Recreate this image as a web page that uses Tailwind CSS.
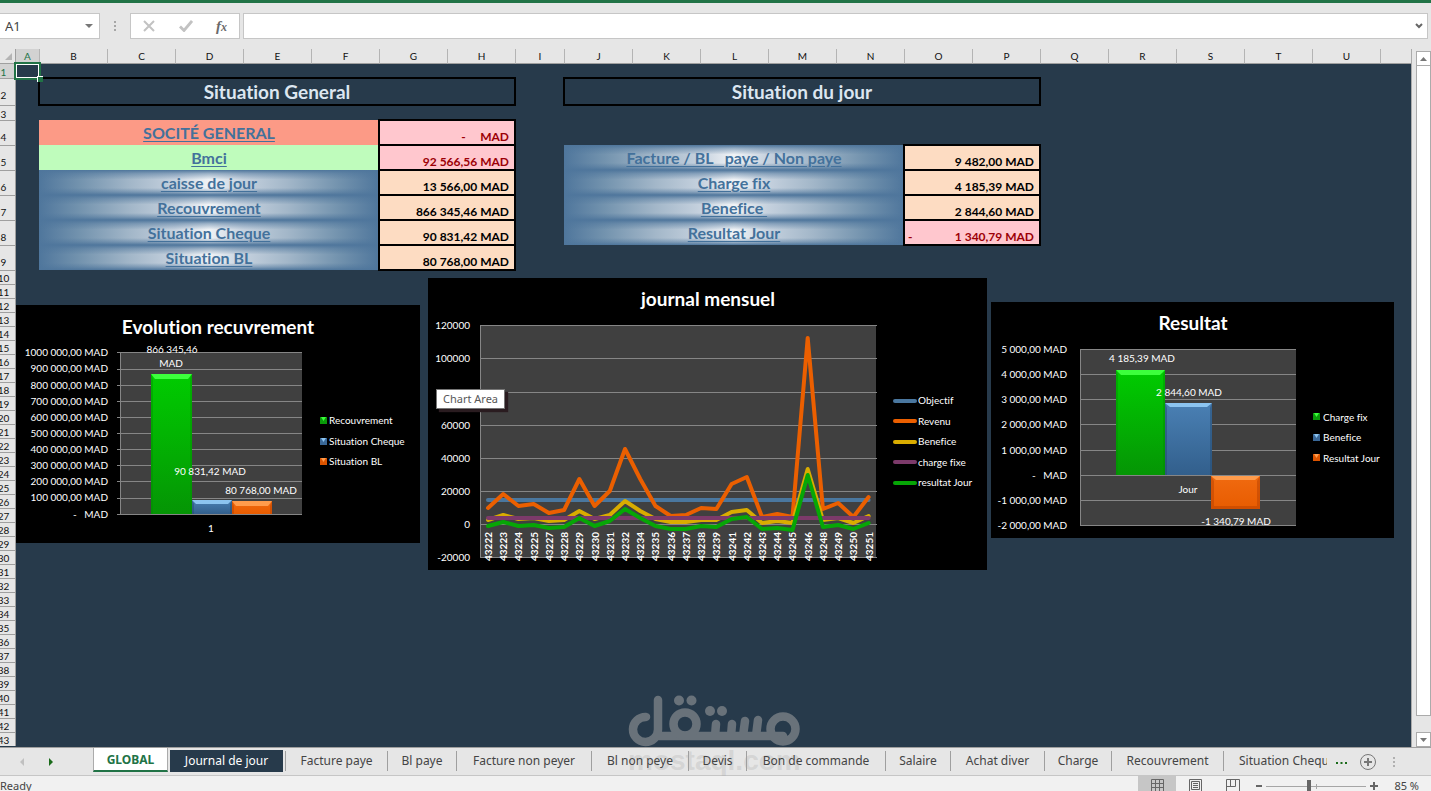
<!DOCTYPE html>
<html lang="fr">
<head>
<meta charset="utf-8">
<title>GLOBAL</title>
<script src="https://cdn.jsdelivr.net/npm/@tailwindcss/browser@4"></script>
</head>
<body class="flex h-screen flex-col overflow-hidden bg-[#e6e6e6] font-['Noto_Sans',sans-serif] text-[#444]">

<div class="h-[3px] shrink-0 bg-[#217346]"></div>

<!-- Formula bar -->
<header class="flex h-[46px] shrink-0 items-start pt-[10px] pr-[3px]">
  <div class="flex h-[26px] w-[100px] items-center border border-l-0 border-[#c6c6c6] bg-white">
    <input aria-label="Name box" value="A1" class="w-[80px] bg-transparent pt-px pl-[5px] text-[13px] text-[#444] outline-none">
    <button aria-label="Open name list" class="flex w-[18px] justify-center"><svg width="8" height="4" viewBox="0 0 8 4"><path d="M0 0h8L4 4z" fill="#777"/></svg></button>
  </div>
  <svg class="mx-3.5 h-[26px]" width="2" height="26" viewBox="0 0 2 26" fill="#a6a6a6"><path d="M0 8h2v2H0zM0 12h2v2H0zM0 16h2v2H0z"/></svg>
  <div class="flex h-[26px] w-[110px] items-center justify-between border border-[#c6c6c6] bg-white pr-[12px] pl-3">
    <button aria-label="Cancel"><svg width="12" height="12" viewBox="0 0 12 12" fill="none" stroke="#c2c2c2" stroke-width="2"><path d="M1 1l10 10M11 1L1 11"/></svg></button>
    <button aria-label="Enter"><svg width="14" height="12" viewBox="0 0 14 12" fill="none" stroke="#c2c2c2" stroke-width="2.800"><path d="M1 6.500l4 4L13 1"/></svg></button>
    <button aria-label="Insert function" class="font-['Liberation_Serif',serif] text-[15px] leading-5 font-bold text-[#6a6a6a] italic">f<span class="text-[12px]">x</span></button>
  </div>
  <div class="ml-[3px] flex h-[26px] flex-1 items-center border border-[#c6c6c6] bg-white">
    <input aria-label="Formula bar" class="min-w-0 flex-1 bg-transparent px-2 text-[13px] outline-none">
    <button aria-label="Expand formula bar" class="px-1"><svg width="8" height="6" viewBox="0 0 8 6" fill="none" stroke="#666" stroke-width="2"><path d="M1 1l3 3 3-3"/></svg></button>
  </div>
</header>

<main class="flex min-h-0 flex-1">
  <div class="relative min-w-0 flex-1 overflow-hidden border-r border-[#ababab] bg-[#273a4b] font-['Lato','Noto_Sans',sans-serif] [font-variant-ligatures:none]">
    <table class="w-full table-fixed border-separate border-spacing-0">
      <colgroup>
        <col class="w-[16px]"><col class="w-[23px]">
        <col class="w-[68px]"><col class="w-[68px]"><col class="w-[68px]"><col class="w-[68px]"><col class="w-[68px]"><col class="w-[68px]"><col class="w-[68px]">
        <col class="w-[49px]">
        <col class="w-[68px]"><col class="w-[68px]"><col class="w-[68px]"><col class="w-[68px]"><col class="w-[68px]"><col class="w-[68px]"><col class="w-[68px]"><col class="w-[68px]"><col class="w-[68px]"><col class="w-[68px]"><col class="w-[68px]"><col class="w-[68px]">
        <col>
      </colgroup>
      <thead>
        <tr id="letters" class="h-[15px] text-[10px] leading-[14px] text-[#111]">
          <th class="border-r border-b border-[#9f9f9f] bg-[#e6e6e6] p-0"><svg class="ml-auto mr-[3px]" width="7" height="7" viewBox="0 0 7 7"><path d="M7 0v7H0z" fill="#b4b4b4"/></svg></th>
          <th class="border-b border-[#217346] bg-[#d2d2d2] p-0 font-normal text-[#217346]">A</th>
        </tr>
      </thead>
      <tbody id="rows" class="text-[10px] leading-3 text-[#111]">
        <tr class="h-[14px]">
          <th class="overflow-hidden border-r border-[#9f9f9f] bg-[#d2d2d2] p-0 align-bottom font-normal text-[#217346]"><div class="-ml-2">1</div></th>
          <td class="relative z-10 p-0">
            <span class="absolute -inset-0.5 border-2 border-[#217346]"><span class="absolute inset-0 border border-white"></span><span class="absolute -right-1 -bottom-1 size-[6px] border-t border-l border-white bg-[#217346]"></span></span>
          </td>
          <td colspan="21" class="p-0"></td>
        </tr>
        <tr class="h-[27px]">
          <th class="overflow-hidden border-t border-r border-[#9f9f9f] bg-[#e6e6e6] p-0 align-bottom font-normal"><div class="-ml-2 pb-1">2</div></th>
          <td class="p-0"></td>
          <td colspan="7" class="relative p-0 pt-px text-center text-[19px] leading-6 font-bold text-[#dce6f0] before:absolute before:-inset-px before:border-2 before:border-black">Situation General</td>
          <td class="p-0"></td>
          <td colspan="7" class="relative p-0 pt-px text-center text-[19px] leading-6 font-bold text-[#dce6f0] before:absolute before:-inset-px before:border-2 before:border-black">Situation du jour</td>
          <td colspan="6" class="p-0"></td>
        </tr>
        <tr class="h-[15px]">
          <th class="overflow-hidden border-t border-r border-[#9f9f9f] bg-[#e6e6e6] p-0 align-bottom font-normal"><div class="-ml-2">3</div></th>
          <td colspan="22" class="p-0"></td>
        </tr>
      </tbody>
    </table>

    <!-- Evolution recuvrement -->
    <svg class="absolute top-[256px] left-[16px]" width="404" height="238" viewBox="0 0 404 238" font-size="10" fill="#fff">
      <defs>
        <linearGradient id="g" x2="0" y2="1"><stop offset="0" stop-color="#0c0"/><stop offset="1" stop-color="#059505"/></linearGradient>
        <linearGradient id="b" x2="0" y2="1"><stop offset="0" stop-color="#4a80b4"/><stop offset="1" stop-color="#325f8c"/></linearGradient>
        <linearGradient id="o" x2="0" y2="1"><stop offset="0" stop-color="#f06a10"/><stop offset="1" stop-color="#e85c00"/></linearGradient>
      </defs>
      <rect width="404" height="238" fill="#000"/>
      <text x="202" y="29" text-anchor="middle" font-size="19" font-weight="700">Evolution recuvrement</text>
      <rect x="104" y="47" width="182" height="162" fill="#404040"/>
      <path d="M101 47.500h185M101 64.500h185M101 80.500h185M101 96.500h185M101 112.500h185M101 128.500h185M101 144.500h185M101 160.500h185M101 176.500h185M101 193.500h185M101 209.500h185M104.500 47v163" stroke="#868686"/>
      <g text-anchor="end">
        <text x="92" y="51">1000 000,00 MAD</text><text x="92" y="67">900 000,00 MAD</text><text x="92" y="84">800 000,00 MAD</text><text x="92" y="100">700 000,00 MAD</text><text x="92" y="116">600 000,00 MAD</text><text x="92" y="132">500 000,00 MAD</text><text x="92" y="148">400 000,00 MAD</text><text x="92" y="164">300 000,00 MAD</text><text x="92" y="180">200 000,00 MAD</text><text x="92" y="196">100 000,00 MAD</text><text x="92" y="213" xml:space="preserve">-   MAD</text>
      </g>
      <rect x="135" y="69" width="41" height="140" fill="url(#g)"/><path d="M135 69h41l-4 5h-33z" fill="#3cff3c"/><path d="M135 69l2 5v135h-2zM176 69l-2 5v135h2z" fill="#008c00" opacity=".4"/>
      <rect x="176" y="195" width="40" height="14" fill="url(#b)"/><path d="M176 195h40l-4 4h-32z" fill="#8cc4f0"/><path d="M176 195l2 4v10h-2zM216 195l-2 4v10h2z" fill="#234a70" opacity=".5"/>
      <rect x="216" y="196" width="40" height="13" fill="url(#o)"/><path d="M216 196h40l-4 5h-32z" fill="#ff9c4c"/><path d="M216 196l2 5v8h-2zM256 196l-2 5v8h2z" fill="#b84000" opacity=".5"/>
      <g text-anchor="middle">
        <text x="156" y="48">866 345,46</text><text x="155" y="62">MAD</text><text x="194" y="170">90 831,42 MAD</text><text x="245" y="189">80 768,00 MAD</text><text x="195" y="227">1</text>
      </g>
      <rect x="304" y="112" width="7" height="7" fill="#0a9a0a"/><path d="M305 112h5L307.500 116z" fill="#3cff3c"/><text x="313" y="119">Recouvrement</text>
      <rect x="304" y="133" width="7" height="7" fill="#3a6898"/><path d="M305 133h5L307.500 137z" fill="#8cc4f0"/><text x="313" y="140">Situation Cheque</text>
      <rect x="304" y="153" width="7" height="7" fill="#dc5400"/><path d="M305 153h5L307.500 157z" fill="#ff9c4c"/><text x="313" y="160">Situation BL</text>
    </svg>

    <!-- journal mensuel -->
    <svg class="absolute top-[229px] left-[428px]" width="559" height="292" viewBox="0 0 559 292" font-size="10" fill="#fff">
      <rect width="559" height="292" fill="#000"/>
      <text x="280" y="28" text-anchor="middle" font-size="19" font-weight="700">journal mensuel</text>
      <rect x="52" y="47" width="396" height="232" fill="#404040"/>
      <path d="M52 47.500h397M52 80.500h397M52 114.500h397M52 147.500h397M52 180.500h397M52 213.500h397M52 246.500h397M52 279.500h397M52.500 47v233" stroke="#868686"/>
      <g text-anchor="end">
        <text x="42" y="51">120000</text><text x="42" y="84">100000</text><text x="42" y="118">80000</text><text x="42" y="151">60000</text><text x="42" y="184">40000</text><text x="42" y="217">20000</text><text x="42" y="250">0</text><text x="42" y="283">-20000</text>
      </g>
      <g id="series" fill="none" stroke-width="4" stroke-linejoin="round" stroke-linecap="round"></g>
      <g id="days" font-weight="700"></g>
      <g stroke-width="4" stroke-linecap="round">
        <path d="M467 123h20" stroke="#4a779f"/><path d="M467 143h20" stroke="#eb5f00"/><path d="M467 164h20" stroke="#d9ac00"/><path d="M467 184h20" stroke="#7c3a6a"/><path d="M467 205h20" stroke="#06a606"/>
      </g>
      <text x="490" y="126">Objectif</text><text x="490" y="147">Revenu</text><text x="490" y="167">Benefice</text><text x="490" y="188">charge fixe</text><text x="490" y="208">resultat Jour</text>
    </svg>
    <div role="tooltip" class="absolute top-[340px] left-[436px] flex h-5 w-[69px] items-center justify-center border border-[#767676] bg-white font-['Noto_Sans',sans-serif] text-[11px] text-[#575757] shadow-[3px_3px_1px_#2a1c20]">Chart Area</div>

    <!-- Resultat -->
    <svg class="absolute top-[253px] left-[991px]" width="403" height="236" viewBox="0 0 403 236" font-size="10" fill="#fff">
      <rect width="403" height="236" fill="#000"/>
      <text x="202" y="28" text-anchor="middle" font-size="19" font-weight="700">Resultat</text>
      <rect x="89" y="47" width="216" height="176" fill="#404040"/>
      <path d="M89 47.500h216M89 72.500h216M89 97.500h216M89 122.500h216M89 148.500h216M89 173.500h216M89 198.500h216M89 223.500h216M89.500 47v177" stroke="#868686"/>
      <g text-anchor="end">
        <text x="76" y="51">5 000,00 MAD</text><text x="76" y="76">4 000,00 MAD</text><text x="76" y="101">3 000,00 MAD</text><text x="76" y="126">2 000,00 MAD</text><text x="76" y="152">1 000,00 MAD</text><text x="76" y="177" xml:space="preserve">-   MAD</text><text x="76" y="202">-1 000,00 MAD</text><text x="76" y="227">-2 000,00 MAD</text>
      </g>
      <rect x="125" y="68" width="49" height="105" fill="url(#g)"/><path d="M125 68h49l-5 5h-39z" fill="#3cff3c"/><path d="M125 68l2 5v100h-2zM174 68l-2 5v100h2z" fill="#008c00" opacity=".4"/>
      <rect x="174" y="101" width="47" height="72" fill="url(#b)"/><path d="M174 101h47l-5 4h-37z" fill="#8cc4f0"/><path d="M174 101l2 5v67h-2zM221 101l-2 5v67h2z" fill="#234a70" opacity=".5"/>
      <rect x="220" y="174" width="49" height="33" fill="url(#o)"/><path d="M220 174h49l-5 4h-39z" fill="#ff9c4c"/><path d="M220 174l3 5v25l-3 3zM269 174l-3 5v25l3 3zM220 207h49l-3-3h-43z" fill="#b84000" opacity=".5"/>
      <g text-anchor="middle">
        <text x="151" y="60">4 185,39 MAD</text><text x="198" y="94">2 844,60 MAD</text><text x="197" y="191">Jour</text><text x="245" y="223">-1 340,79 MAD</text>
      </g>
      <rect x="322" y="111" width="7" height="7" fill="#0a9a0a"/><path d="M323 111h5L325.500 115z" fill="#3cff3c"/><text x="332" y="119">Charge fix</text>
      <rect x="322" y="132" width="7" height="7" fill="#3a6898"/><path d="M323 132h5L325.500 136z" fill="#8cc4f0"/><text x="332" y="139">Benefice</text>
      <rect x="322" y="152" width="7" height="7" fill="#dc5400"/><path d="M323 152h5L325.500 156z" fill="#ff9c4c"/><text x="332" y="160">Resultat Jour</text>
    </svg>
  </div>

  <!-- Vertical scroll bar -->
  <div class="flex w-[19px] shrink-0 flex-col items-center pt-0.5 pl-1">
    <button aria-label="Scroll up" class="flex h-[15px] w-[15px] items-center justify-center border border-[#ababab] bg-white"><svg width="7" height="4" viewBox="0 0 7 4"><path d="M0 4h7L3.500 0z" fill="#777"/></svg></button>
    <div class="flex w-[15px] flex-1 flex-col pb-4"><div class="flex-1 border border-t-0 border-[#ababab] bg-white"></div></div>
    <button aria-label="Scroll down" class="flex h-[15px] w-[15px] items-center justify-center border border-[#ababab] bg-white"><svg width="7" height="4" viewBox="0 0 7 4"><path d="M0 0h7L3.500 4z" fill="#777"/></svg></button>
  </div>
</main>

<!-- Sheet tabs -->
<nav class="relative flex h-[29px] shrink-0 items-start border-t border-b border-[#9f9f9f] border-b-[#c6c6c6] text-[12px] whitespace-nowrap">
  <!-- Watermark -->
  <div class="pointer-events-none absolute bottom-0 left-[628px] flex flex-col items-center">
    <svg role="img" aria-label="مستقل" width="172" height="52" viewBox="0 0 172 52" class="opacity-50" fill="none" stroke="#aaaaaa" stroke-width="8.500" stroke-linecap="round">
      <path d="M18 22a12.500 12.500 0 1 0 12 12.500V5M28 41H155M87 41L88 29M103 41L104 29M115 41L117 26M128 41L130 25"/>
      <circle cx="57" cy="29" r="11.500"/><circle cx="155" cy="34" r="12.500"/>
      <g fill="#aaaaaa" stroke="none"><circle cx="51" cy="5.500" r="5"/><circle cx="63.500" cy="5.500" r="5"/><circle cx="82" cy="16" r="5"/><circle cx="94" cy="16" r="5"/></g>
    </svg>
    <span class="font-['Liberation_Sans',sans-serif] text-[28px] leading-7 font-bold text-[#aaaaaa]/30">mostaql.com</span>
  </div>

  <button aria-label="Previous sheet" class="flex h-[27px] w-[44px] items-center justify-center"><svg width="4" height="8" viewBox="0 0 4 8"><path d="M4 0v8L0 4z" fill="#c0c0c0"/></svg></button>
  <button aria-label="Next sheet" class="flex h-[27px] w-[14px] items-center justify-center"><svg width="4" height="8" viewBox="0 0 4 8"><path d="M0 0v8l4-4z" fill="#1a6b1a"/></svg></button>
  <button class="ml-[35px] h-[24px] w-[75px] border-x border-b-2 border-[#ababab] border-b-[#217346] bg-white pt-0.5 font-bold text-[#217346]">GLOBAL</button>
  <button class="mt-0.5 ml-0.5 h-[22px] w-[113px] bg-[#273a4b] text-white">Journal de jour</button>
  <div class="relative flex min-w-0 pt-[3px] pl-0.5">
    <button class="h-5 w-[102px] border-l border-[#9f9f9f]">Facture paye</button>
    <button class="h-5 w-[69px] border-l border-[#9f9f9f]">Bl paye</button>
    <button class="h-5 w-[135px] border-l border-[#9f9f9f]">Facture non peyer</button>
    <button class="h-5 w-[97px] border-l border-[#9f9f9f]">Bl non peye</button>
    <button class="h-5 w-[58px] border-l border-[#9f9f9f]">Devis</button>
    <button class="h-5 w-[139px] border-l border-[#9f9f9f]">Bon de commande</button>
    <button class="h-5 w-[65px] border-l border-[#9f9f9f]">Salaire</button>
    <button class="h-5 w-[94px] border-l border-[#9f9f9f]">Achat diver</button>
    <button class="h-5 w-[67px] border-l border-[#9f9f9f]">Charge</button>
    <button class="h-5 w-[112px] border-l border-[#9f9f9f]">Recouvrement</button>
    <button class="h-5 w-[104px] overflow-hidden border-l border-[#9f9f9f] pl-[15px] text-left">Situation Cheque</button>
  </div>
  <button aria-label="More sheets" class="ml-[9px] flex h-[31px] items-center"><svg width="11" height="3" viewBox="0 0 11 3" fill="#1a6b1a"><path d="M0 0h2v2H0zM4.500 0h2v2h-2zM9 0h2v2H9z"/></svg></button>
  <button aria-label="New sheet" class="ml-3 flex h-[27px] items-center"><svg width="18" height="18" viewBox="0 0 18 18" fill="none" stroke="#777"><circle cx="9" cy="9" r="7.500"/><path d="M5 9h8M9 5v8" stroke-width="2"/></svg></button>
  <svg class="ml-4 h-[27px]" width="2" height="27" viewBox="0 0 2 27" fill="#b0b0b0"><path d="M0 9h2v2H0zM0 13h2v2H0zM0 17h2v2H0z"/></svg>
</nav>

<!-- Status bar -->
<footer class="flex h-[15px] shrink-0 items-start overflow-hidden bg-[#f1f1f1] text-[11px] leading-5">
  <span>Ready</span>
  <div class="ml-auto flex">
    <button aria-label="Normal view" class="flex h-5 w-[38px] justify-center bg-[#c6c6c6] pt-[3px]"><svg width="13" height="13" viewBox="0 0 13 13" fill="none" stroke="#666"><path d="M.5.5h12v12H.5zM4.500.5v12M8.500.5v12M.5 4.500h12M.5 8.500h12"/></svg></button>
    <button aria-label="Page layout" class="flex h-5 w-[38px] justify-center pt-[3px]"><svg width="13" height="13" viewBox="0 0 13 13" fill="none" stroke="#666"><path d="M.5.5h12v12H.5zM2.500 2.500h8v8h-8zM4 4.500h5M4 6.500h5M4 8.500h5"/></svg></button>
    <button aria-label="Page break preview" class="flex h-5 w-[38px] justify-center pt-[3px]"><svg width="14" height="13" viewBox="0 0 14 13" fill="none" stroke="#666"><path d="M.5.5h13v12H.5zM4.500.5v7M9.500.5v7M.5 7.500h9"/></svg></button>
  </div>
  <button aria-label="Zoom out" class="ml-1 flex h-5 items-center"><svg width="6" height="2" viewBox="0 0 6 2"><path d="M0 0h6v2H0z" fill="#666"/></svg></button>
  <input type="range" aria-label="Zoom" min="0" max="100" value="42" class="mx-1 mt-1 h-3 w-[100px] appearance-none bg-transparent bg-[linear-gradient(#a6a6a6,#a6a6a6),linear-gradient(#a6a6a6,#a6a6a6)] bg-[length:100%_1px,1px_5px] bg-center bg-no-repeat [&::-webkit-slider-thumb]:h-3 [&::-webkit-slider-thumb]:w-1 [&::-webkit-slider-thumb]:appearance-none [&::-webkit-slider-thumb]:bg-[#666]">
  <button aria-label="Zoom in" class="flex h-5 items-center"><svg width="8" height="8" viewBox="0 0 8 8"><path d="M3 0h2v3h3v2H5v3H3V5H0V3h3z" fill="#666"/></svg></button>
  <span class="mr-3 ml-4">85 %</span>
</footer>

<script>
  const letters = document.getElementById('letters');
  for (const c of 'BCDEFGHIJKLMNOPQRSTUV') {
    letters.insertAdjacentHTML('beforeend',
      `<th class="border-b border-l border-[#9f9f9f] border-l-[#b4b4b4] bg-[#e6e6e6] p-0 font-normal">${c === 'V' ? '' : c}</th>`);
  }

  const rows = document.getElementById('rows');
  const head = n => `<th class="overflow-hidden border-t border-r border-[#9f9f9f] bg-[#e6e6e6] p-0 align-bottom font-normal"><div class="${n < 10 ? '-ml-2 pb-0.5' : '-ml-2'}">${n}</div></th>`;

  const fills = {
    red: 'bg-[#fc9a86]',
    green: 'bg-[#bffcbc]',
    blue: 'bg-[linear-gradient(#4f769c_0%,#4f769c80_15%,#4f769c00_38%,#4f769c00_72%,#4f769c80_88%,#4f769c_100%),linear-gradient(90deg,#4f769c,#7393ae_12%,#a3b7c9_27%,#c5d1de_40%,#f0f3f6_50%,#c5d1de_60%,#a3b7c9_73%,#7393ae_88%,#4f769c)]'
  };
  const label = (text, fill) => `<td colspan="5" class="${fills[fill]} p-0 text-center text-[16px] leading-5 font-bold whitespace-pre"><a href="#" class="text-[#43719b] underline underline-offset-2">${text}</a></td>`;
  const value = (text, bad) => {
    const [sign, rest] = text.split('|');
    const tone = bad ? 'bg-[#ffc7ce] text-[#9c0006]' : 'bg-[#fddcc2] text-black';
    return `<td colspan="2" class="${tone} relative p-0 align-bottom text-[12px] leading-4 font-bold before:absolute before:-inset-px before:border-2 before:border-black"><div class="flex justify-between px-1.5 whitespace-pre"><span class="-ml-0.5">${sign}</span><span>${rest}</span></div></td>`;
  };
  const none = n => `<td colspan="${n}" class="p-0"></td>`;
  const left = [
    ['SOCITÉ GENERAL', 'red', '|-     MAD', true],
    ['Bmci', 'green', '|92 566,56 MAD', true],
    ['caisse de jour', 'blue', '|13 566,00 MAD'],
    ['Recouvrement', 'blue', '|866 345,46 MAD'],
    ['Situation Cheque', 'blue', '|90 831,42 MAD'],
    ['Situation BL', 'blue', '|80 768,00 MAD']
  ];
  const right = [
    null,
    ['Facture / BL   paye / Non paye', 'blue', '|9 482,00 MAD'],
    ['Charge fix', 'blue', '|4 185,39 MAD'],
    ['Benefice ', 'blue', '|2 844,60 MAD'],
    ['Resultat Jour', 'blue', '-|1 340,79 MAD', true],
    null
  ];
  left.forEach((l, i) => {
    const r = right[i];
    rows.insertAdjacentHTML('beforeend', `<tr class="h-[25px]">${head(i + 4)}${none(1)}${label(l[0], l[1])}${value(l[2], l[3])}${none(1)}${r ? label(r[0], r[1]) + value(r[2], r[3]) : none(7)}${none(6)}</tr>`);
  });
  for (let n = 10; n < 44; n++) {
    rows.insertAdjacentHTML('beforeend', `<tr class="h-[14px]">${head(n)}${none(22)}</tr>`);
  }

  // Line chart: y positions of each day inside the plot area
  const step = 380.6 / 25;
  const flat = y => Array(26).fill(y);
  const series = [
    ['#4a779f', flat(222)],
    ['#eb5f00', [230,216,228,226,235,232,201,228,213,171,201,228,238,237,230,231,206,199,239,236,239,60,231,225,239,219]],
    ['#d9ac00', [242,237,241,240,243,242,233,241,237,223,233,241,244,244,242,242,234,232,245,243,245,191,242,240,245,238]],
    ['#7c3a6a', flat(240)],
    ['#06a606', [248,244,248,247,250,249,240,248,243,231,240,248,251,251,248,249,241,239,251,250,252,197,249,247,251,245]]
  ];
  document.getElementById('series').innerHTML = series.map(([color, ys]) =>
    `<polyline stroke="${color}" points="${ys.map((y, i) => `${60 + i * step},${y}`).join(' ')}"/>`).join('');
  const days = [22,23,24,25,27,28,29,30,31,32,34,35,36,37,38,39,41,42,43,44,45,46,48,49,50,51];
  document.getElementById('days').innerHTML = days.map((d, i) =>
    `<text transform="translate(${64 + i * step} 283) rotate(-90)">432${d}</text>`).join('');
</script>
</body>
</html>
